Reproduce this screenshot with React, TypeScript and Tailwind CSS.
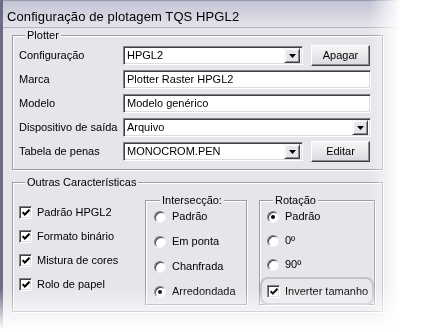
import type { ReactNode } from 'react';

function DropButton() {
    return (
        <div className="flex h-[15px] w-[16px] shrink-0 items-center justify-center bg-[#e6e6ea] border border-t-[#f4f4f4] border-l-[#f4f4f4] border-b-[#404040] border-r-[#404040] shadow-[inset_1px_1px_0_#fff,inset_-1px_-1px_0_#8c8c94]">
            <svg width="7" height="4" viewBox="0 0 7 4">
                <path d="M0 0h7L3.5 4z" fill="#000" />
            </svg>
        </div>
    );
}

function Sunken({ children, className = '' }: { children: ReactNode; className?: string }) {
    return (
        <div className={`flex h-[19px] items-center bg-white border border-t-[#80808a] border-l-[#80808a] border-b-white border-r-white shadow-[inset_1px_1px_0_#404040,inset_-1px_-1px_0_#dcdce0] ${className}`}>
            {children}
        </div>
    );
}

function Select({ value, className = '' }: { value: string; className?: string }) {
    return (
        <Sunken className={`pl-[3px] pr-[2px] ${className}`}>
            <span className="flex-1 truncate">{value}</span>
            <DropButton />
        </Sunken>
    );
}

function Input({ value }: { value: string }) {
    return (
        <Sunken className="flex-1 pl-[3px]">
            <span className="truncate">{value}</span>
        </Sunken>
    );
}

function Button({ label }: { label: string }) {
    return (
        <button className="ml-[8px] flex h-[21px] w-[59px] items-center justify-center bg-gradient-to-b from-[#f6f6f8] to-[#dadade] border border-t-white border-l-white border-b-[#404040] border-r-[#404040] shadow-[inset_-1px_-1px_0_#8c8c94]">
            {label}
        </button>
    );
}

function Row({ label, children }: { label: string; children: ReactNode }) {
    return (
        <div className="flex h-[19px] items-center">
            <span className="w-[104px] shrink-0">{label}</span>
            {children}
        </div>
    );
}

function Check({ label }: { label: string }) {
    return (
        <div className="flex items-center gap-[5px]">
            <div className="flex h-[13px] w-[13px] shrink-0 items-center justify-center bg-white border border-t-[#80808a] border-l-[#80808a] border-b-white border-r-white shadow-[inset_1px_1px_0_#404040,inset_-1px_-1px_0_#dcdce0]">
                <svg width="8" height="7" viewBox="0 0 8 7">
                    <path d="M0.5 3.2l2.3 2.3L7.5 0.8" stroke="#000" strokeWidth="2" fill="none" />
                </svg>
            </div>
            <span>{label}</span>
        </div>
    );
}

function Radio({ label, checked = false }: { label: string; checked?: boolean }) {
    return (
        <div className="flex items-center gap-[6px]">
            <div className="flex h-[12px] w-[12px] shrink-0 items-center justify-center rounded-full bg-white border border-t-[#80808a] border-l-[#80808a] border-b-[#f4f4f4] border-r-[#f4f4f4] shadow-[inset_1px_1px_0_#404040]">
                {checked && <div className="h-[4px] w-[4px] rounded-full bg-black" />}
            </div>
            <span>{label}</span>
        </div>
    );
}

function Group({ title, className = '', children }: { title: string; className?: string; children: ReactNode }) {
    return (
        <fieldset className={`border border-[#9c9ca6] shadow-[1px_1px_0_#fff,inset_1px_1px_0_#fff] ${className}`}>
            <legend className="ml-[6px] bg-[#e5e5ea] px-[2px] leading-[13px]">{title}</legend>
            {children}
        </fieldset>
    );
}

export default function App() {
    return (
        <div className="h-[332px] w-[421px] overflow-hidden bg-white font-['Liberation_Sans',Arial,sans-serif] text-[11px] leading-[13px] text-black">
            <div className="h-[330px] w-[402px] [mask-image:linear-gradient(to_right,#000_370px,transparent_400px)]">
                <div className="h-full [mask-image:linear-gradient(to_bottom,#000_288px,transparent_330px)]">
                    <div className="flex h-full flex-col bg-[#e5e5ea] border-l-[3px] border-l-[#6c6c88]">
                        {/* title bar */}
                        <div className="h-[28px] shrink-0 border-t border-t-[#9898ae] border-b border-b-[#b4b4c4] bg-gradient-to-b from-[#c4c4d4] to-[#e4e4ec] pl-[4px] pt-[8px] text-[13px] leading-[15px] tracking-[0.1px]">
                            Configuração de plotagem TQS HPGL2
                        </div>

                        <div className="flex flex-col gap-[6px] pl-[9px] pt-[1px]">
                            <Group title="Plotter" className="w-[371px] pb-[8px] pl-[6px] pr-[11px] pt-[4px]">
                                <div className="flex flex-col gap-[5px]">
                                    <Row label="Configuração">
                                        <Select value="HPGL2" className="w-[180px]" />
                                        <Button label="Apagar" />
                                    </Row>
                                    <Row label="Marca">
                                        <Input value="Plotter Raster HPGL2" />
                                    </Row>
                                    <Row label="Modelo">
                                        <Input value="Modelo genérico" />
                                    </Row>
                                    <Row label="Dispositivo de saída">
                                        <Select value="Arquivo" className="flex-1" />
                                    </Row>
                                    <Row label="Tabela de penas">
                                        <Select value="MONOCROM.PEN" className="w-[180px]" />
                                        <Button label="Editar" />
                                    </Row>
                                </div>
                            </Group>

                            <Group title="Outras Características" className="w-[371px] pb-[6px] pl-[6px]">
                                <div className="flex">
                                    <div className="flex w-[126px] shrink-0 flex-col gap-[11px] pt-[17px]">
                                        <Check label="Padrão HPGL2" />
                                        <Check label="Formato binário" />
                                        <Check label="Mistura de cores" />
                                        <Check label="Rolo de papel" />
                                    </div>
                                    <Group title="Intersecção:" className="mt-[5px] h-[111px] w-[102px] pl-[8px] pt-[3px]">
                                        <div className="flex flex-col gap-[12px]">
                                            <Radio label="Padrão" />
                                            <Radio label="Em ponta" />
                                            <Radio label="Chanfrada" />
                                            <Radio label="Arredondada" checked />
                                        </div>
                                    </Group>
                                    <Group title="Rotação" className="ml-[12px] mt-[5px] h-[111px] w-[116px] pl-[7px] pt-[3px]">
                                        <div className="flex flex-col gap-[11px]">
                                            <Radio label="Padrão" checked />
                                            <Radio label="0º" />
                                            <Radio label="90º" />
                                        </div>
                                        <div className="relative z-10 -ml-[7px] mt-[6px] flex h-[28px] w-[114px] items-center rounded-[8px] border-2 border-[#c2c2c8] bg-[#e8e8ec] pl-[5px]">
                                            <Check label="Inverter tamanho" />
                                        </div>
                                    </Group>
                                </div>
                            </Group>
                        </div>
                    </div>
                </div>
            </div>
        </div>
    );
}
